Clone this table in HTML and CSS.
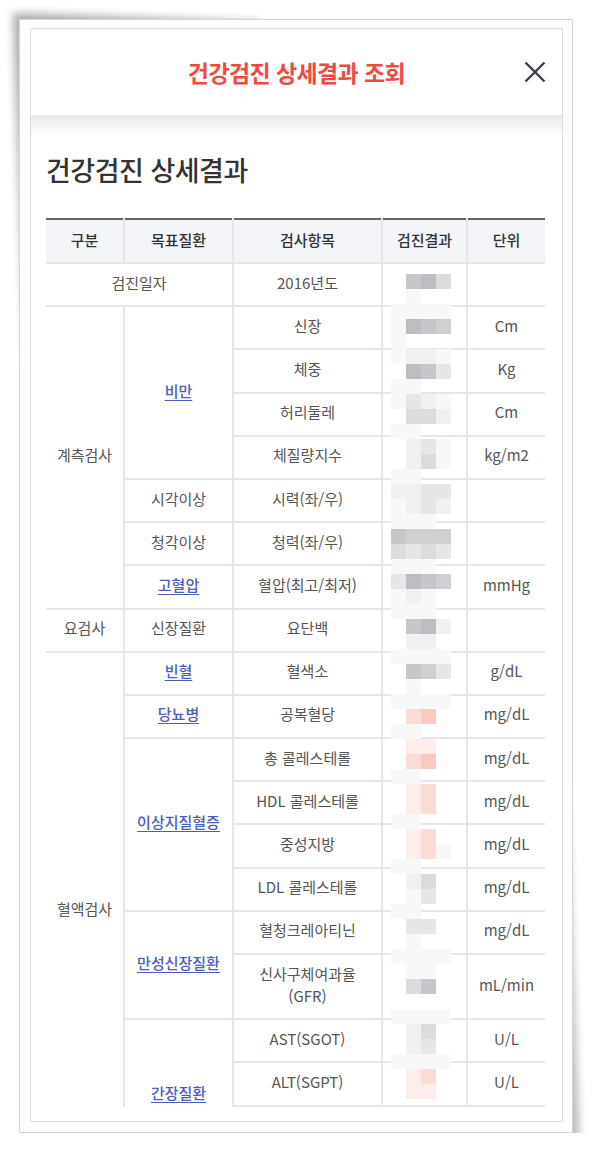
FILE: index.html
```html
<!DOCTYPE html>
<html lang="ko">
<head>
    <meta charset="UTF-8">
    <title>건강검진 상세결과 조회</title>
    <link rel="stylesheet" href="styles.css">
</head>
<body>
    <div class="paper">
        <div class="modal">
            <div class="modal-head">
                <h1 class="modal-title">건강검진 상세결과 조회</h1>
                <button class="close" type="button" aria-label="닫기">
                    <svg width="22" height="22" viewBox="0 0 22 22">
                        <path d="M1.5 1.5L20.5 20.5M20.5 1.5L1.5 20.5" stroke="#3b3e4b" stroke-width="2.4" fill="none"/>
                    </svg>
                </button>
            </div>

            <div class="modal-body">
                <div class="scroll">
                    <h2 class="section-title">건강검진 상세결과</h2>

                    <div class="table-wrap">
                        <table class="result-table">
                            <colgroup>
                                <col class="col-group">
                                <col class="col-disease">
                                <col class="col-item">
                                <col class="col-result">
                                <col class="col-unit">
                            </colgroup>
                            <thead>
                                <tr>
                                    <th>구분</th>
                                    <th>목표질환</th>
                                    <th>검사항목</th>
                                    <th>검진결과</th>
                                    <th>단위</th>
                                </tr>
                            </thead>
                            <tbody>
                                <tr>
                                    <td colspan="2">검진일자</td>
                                    <td>2016년도</td>
                                    <td></td>
                                    <td></td>
                                </tr>

                                <!-- 계측검사 -->
                                <tr>
                                    <td rowspan="7">계측검사</td>
                                    <td rowspan="4"><a href="#">비만</a></td>
                                    <td>신장</td>
                                    <td></td>
                                    <td>Cm</td>
                                </tr>
                                <tr>
                                    <td>체중</td>
                                    <td></td>
                                    <td>Kg</td>
                                </tr>
                                <tr>
                                    <td>허리둘레</td>
                                    <td></td>
                                    <td>Cm</td>
                                </tr>
                                <tr>
                                    <td>체질량지수</td>
                                    <td></td>
                                    <td>kg/m2</td>
                                </tr>
                                <tr>
                                    <td>시각이상</td>
                                    <td>시력(좌/우)</td>
                                    <td></td>
                                    <td></td>
                                </tr>
                                <tr>
                                    <td>청각이상</td>
                                    <td>청력(좌/우)</td>
                                    <td></td>
                                    <td></td>
                                </tr>
                                <tr>
                                    <td><a href="#">고혈압</a></td>
                                    <td>혈압(최고/최저)</td>
                                    <td></td>
                                    <td>mmHg</td>
                                </tr>

                                <!-- 요검사 -->
                                <tr>
                                    <td>요검사</td>
                                    <td>신장질환</td>
                                    <td>요단백</td>
                                    <td></td>
                                    <td></td>
                                </tr>

                                <!-- 혈액검사 -->
                                <tr>
                                    <td rowspan="11">혈액검사</td>
                                    <td><a href="#">빈혈</a></td>
                                    <td>혈색소</td>
                                    <td></td>
                                    <td>g/dL</td>
                                </tr>
                                <tr>
                                    <td><a href="#">당뇨병</a></td>
                                    <td>공복혈당</td>
                                    <td></td>
                                    <td>mg/dL</td>
                                </tr>
                                <tr>
                                    <td rowspan="4"><a href="#">이상지질혈증</a></td>
                                    <td>총 콜레스테롤</td>
                                    <td></td>
                                    <td>mg/dL</td>
                                </tr>
                                <tr>
                                    <td>HDL 콜레스테롤</td>
                                    <td></td>
                                    <td>mg/dL</td>
                                </tr>
                                <tr>
                                    <td>중성지방</td>
                                    <td></td>
                                    <td>mg/dL</td>
                                </tr>
                                <tr>
                                    <td>LDL 콜레스테롤</td>
                                    <td></td>
                                    <td>mg/dL</td>
                                </tr>
                                <tr>
                                    <td rowspan="2"><a href="#">만성신장질환</a></td>
                                    <td>혈청크레아티닌</td>
                                    <td></td>
                                    <td>mg/dL</td>
                                </tr>
                                <tr>
                                    <td>신사구체여과율<br>(GFR)</td>
                                    <td></td>
                                    <td>mL/min</td>
                                </tr>
                                <tr>
                                    <td rowspan="3"><a href="#">간장질환</a></td>
                                    <td>AST(SGOT)</td>
                                    <td></td>
                                    <td>U/L</td>
                                </tr>
                                <tr>
                                    <td>ALT(SGPT)</td>
                                    <td></td>
                                    <td>U/L</td>
                                </tr>
                                <tr>
                                    <td>감마지티피<br>(γ-GTP)</td>
                                    <td></td>
                                    <td>U/L</td>
                                </tr>
                            </tbody>
                        </table>

                        <!-- pixelated cover over the result column -->
                        <div class="mosaic" id="mosaic"></div>
                    </div>
                </div>
            </div>
        </div>
    </div>

    <script>
        // one string per 15px band, one char per block ('.' = clear)
        const mosaicRows = [
            '.noz', '.w..', 'wwww', 'wonm', 'w...', 'wxxw', '.ony', 'ww..',
            'wyxw', '.zzx', 'ww..', '.xyw', '.xzw', 'ww..', 'xxyy', 'wxyx',
            'www.', 'nmmm', 'zyzy', 'www.', 'yonm', 'wxw.', 'www.', '.nox',
            '.xx.', 'wwww', '.nmy', '.w..', 'wwww', '.qr.', 'ww..', '.pp.',
            '.qr.', 'ww..', '.pq.', '.pq.', 'ww..', '.pq.', '.pqw', 'ww..',
            '.xz.', '.wy.', 'ww..', '.yy.', '.w..', 'wwww', '.ww.', '.zn.',
            '....', 'wwww', '.xz.', '.xy.', 'wwww', '.pq.', '.pp.'
        ];

        const mosaic = document.getElementById('mosaic');
        mosaicRows.forEach(row => {
            for (const ch of row) {
                const block = document.createElement('span');
                if (ch !== '.') block.className = 'px-' + ch;
                mosaic.appendChild(block);
            }
        });
    </script>
</body>
</html>
```

FILE: styles.css
```css
body {
    margin: 0;
    background: #fff;
    font-family: "Noto Sans CJK KR", "Noto Sans", sans-serif;
}

/* outer photo frame with lifted corners */
.paper {
    position: relative;
    width: 554px;
    height: 1114px;
    margin: 19px 0 0 19px;
    padding: 8px 9px 10px 10px;
    box-sizing: border-box;
    border: 1px solid #d6d6d6;
    background: #fff;
}

.paper::before,
.paper::after {
    content: '';
    position: absolute;
    width: 45%;
    height: 32%;
    z-index: -1;
}

.paper::before {
    top: -1px;
    left: -1px;
    box-shadow: -6px -6px 8px rgba(0,0,0,0.32);
    transform-origin: 0 0;
    transform: matrix(1, 0.035, 0.035, 1, 0, 0);
}

.paper::after {
    bottom: -1px;
    right: -1px;
    box-shadow: 6px 6px 8px rgba(0,0,0,0.28);
    transform-origin: 100% 100%;
    transform: matrix(1, 0.035, 0.035, 1, 0, 0);
}

.modal {
    height: 100%;
    box-sizing: border-box;
    border: 1px solid #dcdcdc;
    display: flex;
    flex-direction: column;
    background: #fff;
}

.modal-head {
    position: relative;
    flex: none;
    height: 86px;
    display: flex;
    align-items: center;
    justify-content: center;
    border-bottom: 1px solid #d6d6d6;
}

.modal-head::after {
    content: '';
    position: absolute;
    left: 0;
    right: 0;
    top: 100%;
    height: 20px;
    background: linear-gradient(#e8e8e8, rgba(255,255,255,0));
}

.modal-title {
    margin: 0;
    font-size: 23px;
    font-weight: 700;
    color: #ef4a3f;
    letter-spacing: -0.6px;
}

.close {
    position: absolute;
    right: 16px;
    top: 50%;
    transform: translateY(-50%);
    padding: 0;
    border: 0;
    background: none;
    width: 22px;
    height: 22px;
}

.close svg {
    display: block;
}

.modal-body {
    flex: 1;
    min-height: 0;
    display: flex;
    padding-bottom: 14px;
}

.scroll {
    flex: 1;
    overflow: hidden;
    padding: 0 16px 0 15px;
}

.section-title {
    margin: 35px 0 29px;
    font-size: 27px;
    line-height: 38px;
    font-weight: 500;
    color: #333;
    letter-spacing: -0.5px;
}

.table-wrap {
    position: relative;
}

.result-table {
    width: 499px;
    table-layout: fixed;
    border-collapse: collapse;
    border-left-style: hidden;
    border-right-style: hidden;
    font-size: 15px;
    color: #555;
    text-align: center;
}

.col-group { width: 78px; }
.col-disease { width: 109px; }
.col-item { width: 149px; }
.col-result { width: 85px; }
.col-unit { width: 78px; }

.result-table th,
.result-table td {
    border: 2px solid #e4e6eb;
    padding: 7.6px 2px 11.6px;
    line-height: 22px;
}

.result-table th {
    padding: 9px 2px 11px;
    background: #f4f5f9;
    font-weight: 500;
    color: #333;
    border-top: 2px solid #666;
}

.result-table a {
    color: #4b5dbd;
    font-weight: 500;
    text-decoration: underline;
    text-underline-offset: 3px;
}

/* blurred results */
.mosaic {
    position: absolute;
    left: 345px;
    top: 56px;
    display: grid;
    grid-template-columns: repeat(4, 15px);
    grid-auto-rows: 15px;
}

.px-w { background: #f8f8f8; }
.px-x { background: #f1f1f2; }
.px-y { background: #e7e7e9; }
.px-z { background: #dcdcde; }
.px-m { background: #d0d0d3; }
.px-n { background: #c7c7cb; }
.px-o { background: #bdbdc1; }
.px-p { background: #fdeeec; }
.px-q { background: #fcdcd7; }
.px-r { background: #fbc8c2; }
```
